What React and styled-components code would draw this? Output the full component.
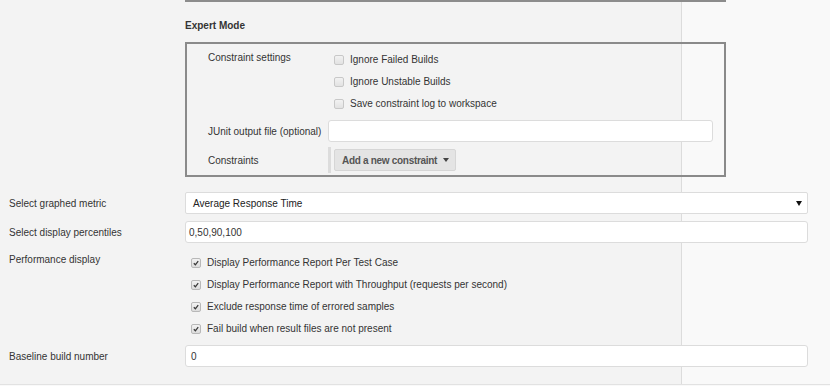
import React from "react";
import styled, { createGlobalStyle } from "styled-components";

const GlobalStyle = createGlobalStyle`
  html, body {
    margin: 0;
    padding: 0;
  }
  body {
    font-family: "Liberation Sans", Arial, sans-serif;
    font-size: 10px;
    color: #333;
    background: #f9f9f9;
  }
`;

const Page = styled.div`
  width: 830px;
  height: 385px;
  box-sizing: border-box;
  overflow: hidden;
  background: linear-gradient(
    to right,
    #f3f3f3 0,
    #f3f3f3 681px,
    #dcdcdc 681px,
    #dcdcdc 682px,
    #f9f9f9 682px
  );
  border-bottom: 1px solid #e2e2e2;
`;

const TopRule = styled.div`
  margin-left: 185px;
  width: 541px;
  height: 2px;
  background: #8c8c8c;
`;

const Section = styled.div`
  margin-left: 185px;
  width: 541px;
`;

const SectionTitle = styled.div`
  font-weight: bold;
  font-size: 10px;
  line-height: 12px;
  color: #333;
  padding-top: 18px;
  height: 40px;
  box-sizing: border-box;
`;

const ExpertBox = styled.div`
  border: 2px solid #8a8a8a;
  padding: 4px 0 2px 21px;
`;

const BoxRow = styled.div`
  display: grid;
  grid-template-columns: 120px 385px;
  align-items: ${({ $top }) => ($top ? "start" : "center")};
  margin-top: ${({ $mt }) => $mt || 0}px;
`;

const BoxLabel = styled.div`
  color: #333;
  white-space: nowrap;
  padding-top: ${({ $pt }) => $pt || 0}px;
`;

const CheckList = styled.div`
  display: flex;
  flex-direction: column;
`;

const CheckRow = styled.label`
  display: flex;
  align-items: center;
  height: 22px;
  padding-left: 6px;
  gap: 6px;
  color: #333;
  white-space: nowrap;
`;

const Box = styled.span`
  width: 8px;
  height: 8px;
  border: 1px solid ${({ $checked }) => ($checked ? "#b8b8b8" : "#c8c8c8")};
  border-radius: 2px;
  background: ${({ $checked }) =>
    $checked
      ? "linear-gradient(#f2f2f2, #dcdcdc)"
      : "linear-gradient(#f2f2f2, #e2e2e2)"};
  display: flex;
  align-items: center;
  justify-content: center;
  flex-shrink: 0;
  margin-top: 1px;
`;

const TextInput = styled.div`
  height: 22px;
  box-sizing: border-box;
  background: #fff;
  border: 1px solid #dcdcdc;
  border-radius: 3px;
  padding-left: ${({ $pl }) => $pl || 3}px;
  display: flex;
  align-items: center;
  color: #333;
`;

const ButtonWrap = styled.div`
  height: 26px;
  border-left: 3px solid #dcdcdc;
  display: flex;
  align-items: center;
  padding-left: 3px;
`;

const DropButton = styled.div`
  height: 22px;
  box-sizing: border-box;
  background: #e4e4e4;
  border: 1px solid #d6d6d6;
  border-radius: 2px;
  display: flex;
  align-items: center;
  padding: 0 6px 0 7px;
  gap: 6px;
  font-weight: bold;
  letter-spacing: -0.3px;
  color: #555;
  white-space: nowrap;
`;

const Caret = styled.span`
  width: 0;
  height: 0;
  border-left: 3px solid transparent;
  border-right: 3px solid transparent;
  border-top: 4px solid #444;
`;

const Form = styled.div`
  margin-top: 15px;
`;

const FormRow = styled.div`
  display: grid;
  grid-template-columns: 185px 623px;
  align-items: ${({ $top }) => ($top ? "start" : "center")};
  margin-top: ${({ $mt }) => $mt || 0}px;
`;

const FormLabel = styled.div`
  padding-left: 9px;
  padding-top: ${({ $pt }) => $pt || 0}px;
  color: #333;
`;

const Select = styled.div`
  height: 22px;
  box-sizing: border-box;
  background: #fff;
  border: 1px solid #dcdcdc;
  border-radius: 2px;
  display: flex;
  align-items: center;
  justify-content: space-between;
  padding: 0 5px 0 7px;
  color: #222;
`;

const SelectArrow = styled.span`
  width: 0;
  height: 0;
  border-left: 3px solid transparent;
  border-right: 3px solid transparent;
  border-top: 5px solid #111;
`;

const Check = ({ checked }) => (
  <Box $checked={checked}>
    {checked && (
      <svg width="6" height="6" viewBox="0 0 6 6">
        <path d="M0.8 3.2 L2.4 4.8 L5.2 1.2" fill="none" stroke="#3a3a3a" strokeWidth="1.3" />
      </svg>
    )}
  </Box>
);

const CheckItem = ({ checked, children }) => (
  <CheckRow>
    <Check checked={checked} />
    {children}
  </CheckRow>
);

const App = () => {
  const constraintOptions = [
    "Ignore Failed Builds",
    "Ignore Unstable Builds",
    "Save constraint log to workspace",
  ];
  const displayOptions = [
    "Display Performance Report Per Test Case",
    "Display Performance Report with Throughput (requests per second)",
    "Exclude response time of errored samples",
    "Fail build when result files are not present",
  ];

  return (
    <>
      <GlobalStyle />
      <Page>
        <TopRule />
        <Section>
          <SectionTitle>Expert Mode</SectionTitle>
          <ExpertBox>
            <BoxRow $top>
              <BoxLabel $pt={4}>Constraint settings</BoxLabel>
              <CheckList>
                {constraintOptions.map((o) => (
                  <CheckItem key={o}>{o}</CheckItem>
                ))}
              </CheckList>
            </BoxRow>
            <BoxRow $mt={6}>
              <BoxLabel>JUnit output file (optional)</BoxLabel>
              <TextInput />
            </BoxRow>
            <BoxRow $mt={5}>
              <BoxLabel>Constraints</BoxLabel>
              <ButtonWrap>
                <DropButton>
                  Add a new constraint
                  <Caret />
                </DropButton>
              </ButtonWrap>
            </BoxRow>
          </ExpertBox>
        </Section>
        <Form>
          <FormRow>
            <FormLabel>Select graphed metric</FormLabel>
            <Select>
              Average Response Time
              <SelectArrow />
            </Select>
          </FormRow>
          <FormRow $mt={7}>
            <FormLabel>Select display percentiles</FormLabel>
            <TextInput>0,50,90,100</TextInput>
          </FormRow>
          <FormRow $mt={8} $top>
            <FormLabel $pt={3}>Performance display</FormLabel>
            <CheckList>
              {displayOptions.map((o) => (
                <CheckItem key={o} checked>
                  {o}
                </CheckItem>
              ))}
            </CheckList>
          </FormRow>
          <FormRow $mt={6}>
            <FormLabel>Baseline build number</FormLabel>
            <TextInput $pl={5}>0</TextInput>
          </FormRow>
        </Form>
      </Page>
    </>
  );
};

export default App;
